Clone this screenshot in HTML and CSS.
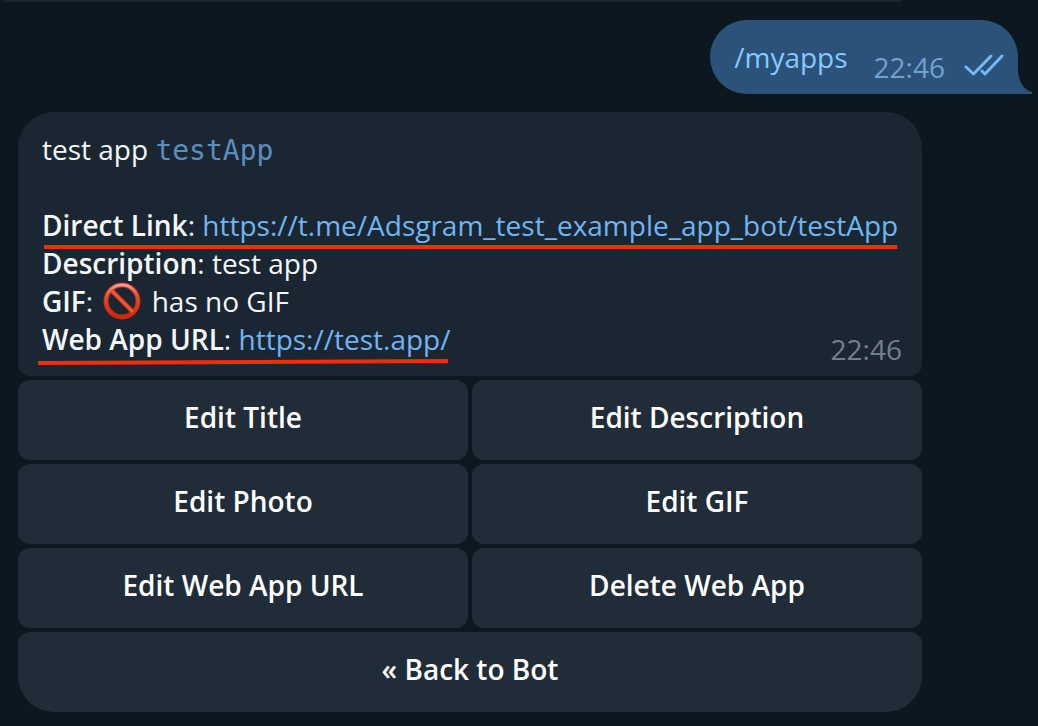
FILE: index.html
```
<!DOCTYPE html>
<html lang="en">
<head>
    <meta charset="UTF-8">
    <meta name="viewport" content="width=device-width, initial-scale=1.0">
    <title>Chat</title>
    <link rel="stylesheet" href="styles.css">
</head>
<body>

<main class="chat">
    <div class="previous"></div>

    <div class="message-out">
        <a class="command" href="#">/myapps</a>
        <time class="time time-out">22:46</time>
        <svg class="checks" width="40" height="22" viewBox="0 0 40 22" fill="none" stroke="#72b9f6" stroke-width="3" stroke-linecap="round" stroke-linejoin="round">
            <path d="M2 13L9.500 20L27 2"/>
            <path d="M18 17L21 20L38 2"/>
        </svg>
        <svg class="tail" width="15" height="42" viewBox="0 0 15 42">
            <path d="M0 0C1 8 0 15 1 20C2 30 7 38 15 40V42H0Z" fill="#2b5278"/>
        </svg>
    </div>

    <div class="message-in">
        <div class="text">
            <p>test app <code>testApp</code></p>
            <p class="blank"></p>
            <p><span class="marked"><b>Direct Link</b>: <a href="#">https://t.me/Adsgram_test_example_app_bot/testApp</a>
                <svg class="mark" viewBox="0 0 856 6" preserveAspectRatio="none"><path d="M2 3Q430 4 855 3" stroke="#f52b0a" stroke-width="4" fill="none"/></svg></span></p>
            <p><b>Description</b>: test app</p>
            <p><b>GIF</b>:
                <svg class="no-entry" width="38" height="38" viewBox="0 0 38 38" fill="none" role="img" aria-label="prohibited">
                    <defs>
                        <linearGradient id="ring" x1="0" y1="0" x2="0" y2="1">
                            <stop offset="0" stop-color="#f0a092"/>
                            <stop offset="0.3" stop-color="#e2573f"/>
                            <stop offset="1" stop-color="#d52400"/>
                        </linearGradient>
                    </defs>
                    <circle cx="19" cy="19" r="16" stroke="#c92b13" stroke-width="5"/>
                    <path d="M8 8L30 30" stroke="#c92b13" stroke-width="5"/>
                    <circle cx="19" cy="19" r="16" stroke="url(#ring)" stroke-width="3"/>
                    <path d="M8 8L30 30" stroke="#e65a40" stroke-width="3"/>
                </svg>
                has no GIF</p>
            <div class="last-line">
                <p><span class="marked"><b>Web App URL</b>: <a href="#">https://test.app/</a>
                    <svg class="mark mark-wide" viewBox="0 0 412 6" preserveAspectRatio="none"><path d="M0 4L412 2" stroke="#f52b0a" stroke-width="4"/></svg></span></p>
                <time class="time">22:46</time>
            </div>
        </div>

        <div class="keyboard">
            <button type="button">Edit Title</button>
            <button type="button">Edit Description</button>
            <button type="button">Edit Photo</button>
            <button type="button">Edit GIF</button>
            <button type="button">Edit Web App URL</button>
            <button type="button">Delete Web App</button>
            <button type="button" class="back">« Back to Bot</button>
        </div>
    </div>
</main>

</body>
</html>
```
FILE: styles.css
```
body {
    margin: 0;
    background-color: #0d1720;
    color: #f5f8fa;
    font-family: "Open Sans", sans-serif;
    font-size: 28px;
    line-height: 38px;
}
.chat {
    display: flex;
    flex-direction: column;
    gap: 18px;
    padding: 0 20px 14px 18px;
}
.previous {
    height: 2px;
    margin: 0 116px 0 -14px;
    background-color: #1b2530;
    border-bottom-right-radius: 8px;
}
a {
    color: #70b5f3;
    text-decoration: none;
}
.message-out {
    position: relative;
    align-self: flex-end;
    display: flex;
    align-items: flex-start;
    padding: 18px 14px 18px 24px;
    border-radius: 37px 37px 0 37px;
    background-color: #2b5278;
}
.command {
    color: #86c9ff;
}
.time {
    margin-top: 10px;
    margin-bottom: -10px;
    color: #73808c;
}
.time-out {
    margin-left: 26px;
    color: #71a3cf;
}
.checks {
    margin: 16px 0 0 19px;
}
.tail {
    position: absolute;
    right: -14px;
    bottom: 0;
}
.message-in {
    display: flex;
    flex-direction: column;
    gap: 4px;
    width: 100%;
    max-width: 904px;
}
.text {
    padding: 18px 20px 18px 24px;
    border-radius: 36px 36px 12px 12px;
    background-color: #1a2732;
}
.text p {
    margin: 0;
}
.text b {
    font-weight: 600;
}
.text .blank {
    height: 38px;
}
code {
    color: #5a8fbd;
    font-family: "DejaVu Sans Mono", monospace;
    font-size: 28px;
    line-height: 28px;
}
.marked {
    position: relative;
}
/* red pen strokes under the two links */
.mark {
    position: absolute;
    left: 0;
    bottom: -6px;
    width: 100%;
    height: 6px;
}
.mark-wide {
    left: -4px;
    bottom: -7px;
    width: calc(100% + 2px);
}
.no-entry {
    margin: -4px 3px;
    vertical-align: -4px;
}
.last-line {
    display: flex;
    justify-content: space-between;
}
.keyboard {
    display: grid;
    grid-template-columns: 1fr 1fr;
    gap: 4px;
}
.keyboard button {
    height: 80px;
    padding: 0 12px 6px;
    border: none;
    border-radius: 12px;
    background-color: #202d39;
    color: #fff;
    font: inherit;
    font-weight: 600;
    cursor: pointer;
}
.keyboard button:hover {
    background-color: #273644;
}
.keyboard .back {
    grid-column: 1 / -1;
    border-radius: 12px 12px 36px 36px;
}
```
